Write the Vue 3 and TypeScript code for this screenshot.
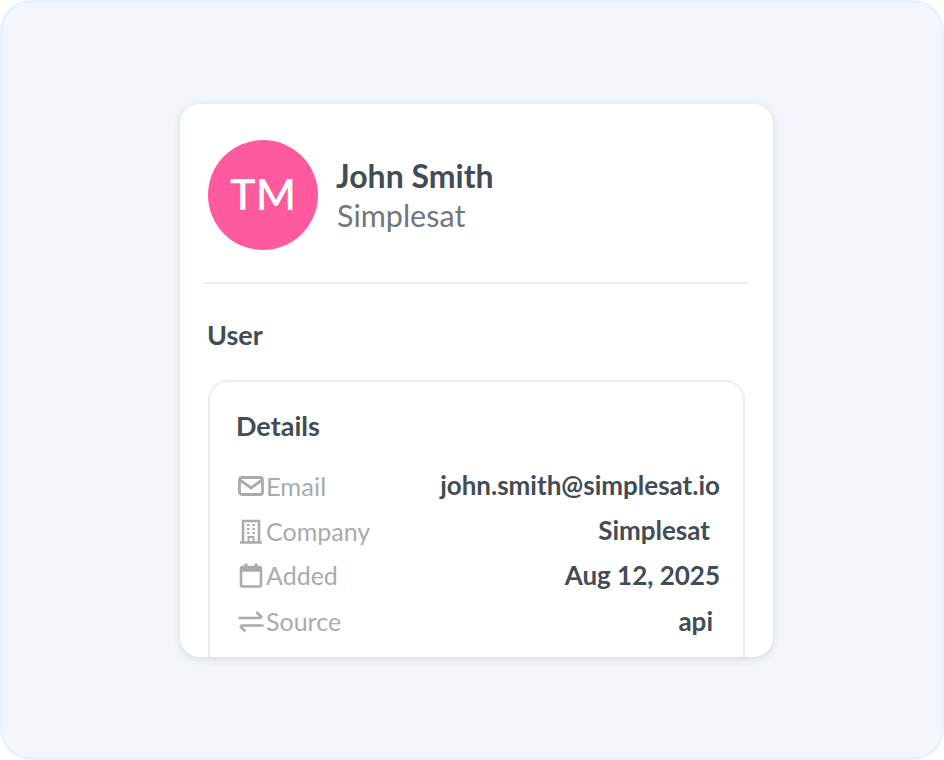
<script setup lang="ts">
interface Row { label: string; value: string; icon: string; cls: string }
const rows: Row[] = [
  { label: 'Email', value: 'john.smith@simplesat.io', icon: 'mail', cls: 'r-email' },
  { label: 'Company', value: 'Simplesat', icon: 'company', cls: 'r-company' },
  { label: 'Added', value: 'Aug 12, 2025', icon: 'cal', cls: 'r-added' },
  { label: 'Source', value: 'api', icon: 'source', cls: 'r-source' },
]
</script>

<template>
  <div class="stage">
    <section class="card">
      <header class="head">
        <div class="avatar">TM</div>
        <div class="who">
          <div class="name">John Smith</div>
          <div class="org">Simplesat</div>
        </div>
      </header>
      <div class="rule"></div>
      <h2 class="section">User</h2>
      <div class="details">
        <h3 class="title">Details</h3>
        <div v-for="r in rows" :key="r.label" class="row" :class="r.cls">
          <span class="label">
            <svg class="icon" viewBox="0 0 28 28" fill="none" stroke="#a9abad" stroke-width="2.8">
              <template v-if="r.icon === 'mail'">
                <rect x="2.5" y="5.5" width="23" height="17" rx="2.5" />
                <path d="M3 8l11 8 11-8" />
              </template>
              <template v-else-if="r.icon === 'company'">
                <path d="M6 25V4h16v21" stroke-width="2.6" />
                <path d="M3 25.5h22" stroke-width="2.4" />
                <path d="M11.5 25v-5h5v5" stroke-width="2" />
                <path d="M10 8h2.5M15.5 8h2.5M10 12h2.5M15.5 12h2.5M10 16h2.5M15.5 16h2.5" stroke-width="2.2" />
              </template>
              <template v-else-if="r.icon === 'cal'">
                <rect x="4" y="6" width="20" height="19.5" rx="2" stroke-width="2.6" />
                <path d="M4 8.5h20" stroke-width="4.4" />
                <path d="M9 2.5v4M19 2.5v4" stroke-width="3" />
              </template>
              <template v-else>
                <path d="M1.5 11h23M19.5 5l5.5 5.5" stroke-width="2.6" />
                <path d="M26.5 18.5h-23M8.5 24.5L3 19" stroke-width="2.6" />
              </template>
            </svg>
            {{ r.label }}
          </span>
          <span class="value">{{ r.value }}</span>
        </div>
      </div>
    </section>
  </div>
</template>

<style>
html, body { margin: 0; padding: 0; background: #fff; }
</style>

<style scoped>
.stage {
  box-sizing: border-box;
  width: 944px;
  height: 760px;
  padding: 101px 0 0 177px;
  display: flex;
  align-items: flex-start;
  background: #f3f7fb;
  border: 3px solid #eaf2fe;
  border-radius: 30px;
  font-family: Lato, "Liberation Sans", sans-serif;
  color: #434c54;
}
.card {
  box-sizing: border-box;
  width: 593px;
  height: 553px;
  background: #fff;
  border-radius: 20px;
  box-shadow: 0 2px 8px rgba(60, 75, 100, 0.16);
  overflow: hidden;
  padding: 36px 28px 0;
}
.head { display: flex; align-items: center; gap: 18px; }
.avatar {
  width: 110px;
  height: 110px;
  border-radius: 50%;
  background: #ff5a9d;
  color: #fff;
  font-size: 43px;
  font-weight: 600;
  line-height: 108px;
  text-align: center;
  flex: none;
}
.who { margin-top: 1px; }
.name { font-size: 32px; font-weight: 700; line-height: 38px; }
.org { font-size: 30.5px; line-height: 40px; color: #73777b; margin-left: 1px; }
.rule { height: 2px; background: #ecedf0; margin: 32px -4px 0 -4px; }
.section { margin: 34px 0 0 -1px; font-size: 27px; font-weight: 700; line-height: 34px; }
.details {
  box-sizing: border-box;
  margin-top: 28px;
  height: 300px;
  border: 2px solid #ecedf1;
  border-radius: 20px;
  padding: 27px 23px 0 27px;
}
.title { margin: 0 0 20px -1px; font-size: 27px; font-weight: 700; line-height: 34px; }
.row {
  display: flex;
  justify-content: space-between;
  align-items: center;
  height: 45px;
}
.label {
  display: flex;
  align-items: center;
  gap: 1px;
  font-size: 25px;
  color: #a9abad;
}
.icon { width: 28px; height: 28px; flex: none; margin-top: 1px; }
.value { font-size: 26px; font-weight: 700; line-height: 34px; margin-top: -2px; }
.r-email .label { font-size: 25.5px; }
.r-company .value { margin-right: 10px; }
.r-source .value { margin-right: 7px; margin-top: 0; }
.r-added .label { margin-top: -2px; }
.r-added .value { margin-top: -1px; }
</style>
